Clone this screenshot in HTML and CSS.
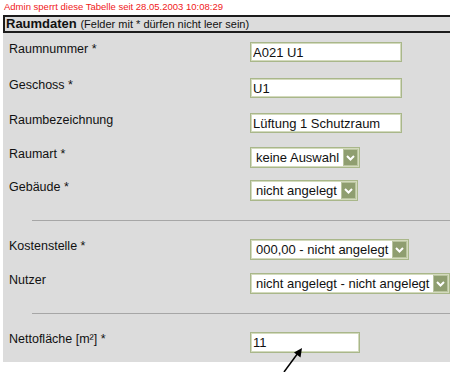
FILE: index.html
```html
<!DOCTYPE html>
<html lang="de">
<head>
  <meta charset="UTF-8" />
  <title>Raumdaten</title>
  <link rel="stylesheet" href="styles.css">
</head>
<body>
  <div class="lock">Admin sperrt diese Tabelle seit 28.05.2003 10:08:29</div>

  <div class="head"><b>Raumdaten</b> <span class="hint">(Felder mit * dürfen nicht leer sein)</span></div>

  <div class="panel">
    <div class="group first">
      <div class="row"><span class="label">Raumnummer *</span><input class="field" type="text" value="A021 U1" /></div>
      <div class="row"><span class="label">Geschoss *</span><input class="field" type="text" value="U1" /></div>
      <div class="row"><span class="label">Raumbezeichnung</span><input class="field" type="text" value="Lüftung 1 Schutzraum" /></div>
      <div class="row"><span class="label">Raumart *</span>
        <div class="select"><span>keine Auswahl</span><span class="arrow"><svg width="13" height="15" viewBox="0 0 13 15"><polyline points="3,6 6.5,9.5 10,6" fill="none" stroke="#fff" stroke-width="2"/></svg></span></div>
      </div>
      <div class="row"><span class="label">Gebäude *</span>
        <div class="select"><span>nicht angelegt</span><span class="arrow"><svg width="13" height="15" viewBox="0 0 13 15"><polyline points="3,6 6.5,9.5 10,6" fill="none" stroke="#fff" stroke-width="2"/></svg></span></div>
      </div>
    </div>

    <hr class="sep" />

    <div class="group second">
      <div class="row"><span class="label">Kostenstelle *</span>
        <div class="select"><span>000,00 - nicht angelegt</span><span class="arrow"><svg width="13" height="15" viewBox="0 0 13 15"><polyline points="3,6 6.5,9.5 10,6" fill="none" stroke="#fff" stroke-width="2"/></svg></span></div>
      </div>
      <div class="row"><span class="label">Nutzer</span>
        <div class="select"><span>nicht angelegt - nicht angelegt</span><span class="arrow"><svg width="13" height="15" viewBox="0 0 13 15"><polyline points="3,6 6.5,9.5 10,6" fill="none" stroke="#fff" stroke-width="2"/></svg></span></div>
      </div>
    </div>

    <hr class="sep" />

    <div class="group third">
      <div class="row"><span class="label">Nettofläche [m²] *</span><input class="field small" type="text" value="11" /></div>
    </div>
  </div>

  <svg class="pointer" width="40" height="40" viewBox="0 0 40 40">
    <line x1="5" y1="40" x2="19" y2="21" stroke="#000" stroke-width="1.5"/>
    <polygon points="23,16 21.5,25.5 15,20.5" fill="#000"/>
  </svg>
</body>
</html>
```

FILE: styles.css
```css
:root {
  --panel: #dcdcdc;
  --frame: #a9b78a;
  --frame-light: #d3dabd;
  --text: #111;
}

body {
  margin: 0;
  font-family: "Liberation Sans", Arial, sans-serif;
  color: var(--text);
  background: #fff;
  position: relative;
  width: 450px;
  height: 372px;
  overflow: hidden;
}

.lock {
  height: 15px;
  box-sizing: border-box;
  padding: 1px 0 0 4px;
  font-size: 9.5px;
  line-height: 12px;
  color: #f0201a;
}

.head {
  margin-left: 3px;
  height: 18px;
  box-sizing: border-box;
  border: 2px solid #1c1c1c;
  border-right: none;
  background: var(--panel);
  padding-left: 1px;
  line-height: 14px;
  font-size: 13px;
  white-space: nowrap;
}

.hint {
  font-size: 11px;
}

.panel {
  margin-left: 3px;
  height: 329px;
  box-sizing: border-box;
  background: var(--panel);
  padding: 9px 0 0 6px;
}

.group {
  display: grid;
}

.group.first {
  grid-template-rows: 36px 35px 34px 33px 21px;
}

.group.second {
  grid-template-rows: 34px 21px;
}

.row {
  display: grid;
  grid-template-columns: 241px auto;
  align-items: start;
}

.label {
  font-size: 12.5px;
  line-height: 15px;
}

.sep {
  margin: 19px 0 18px 23px;
  border: none;
  border-top: 1px solid #a6a6a6;
  height: 0;
}

.group.third {
  margin-top: 3px;
}

.field {
  width: 152px;
  height: 20px;
  box-sizing: border-box;
  margin: 0;
  padding: 0 2px;
  border: 1px solid var(--frame);
  box-shadow: inset 0 0 0 1px var(--frame-light);
  background: #fff;
  font-family: "Liberation Sans", Arial, sans-serif;
  font-size: 13px;
  color: var(--text);
  outline: none;
}

.field.small {
  width: 110px;
  height: 21px;
}

.select {
  justify-self: start;
  display: inline-flex;
  align-items: center;
  height: 21px;
  box-sizing: border-box;
  border: 1px solid var(--frame);
  box-shadow: inset 0 0 0 1px var(--frame-light);
  background: #fff;
  padding: 0 1px 0 5px;
  font-size: 13px;
  white-space: nowrap;
}

.arrow {
  margin-left: 4px;
  width: 15px;
  height: 17px;
  box-sizing: border-box;
  border: 1px solid #b9c49f;
  background: #8f9e70;
  display: flex;
  align-items: center;
  justify-content: center;
}

.pointer {
  position: absolute;
  left: 279px;
  top: 332px;
}
```
